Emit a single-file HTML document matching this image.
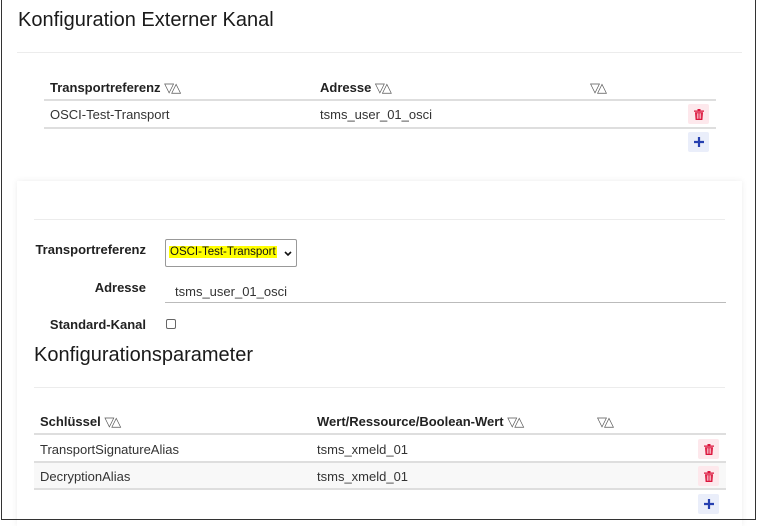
<!DOCTYPE html>
<html><head><meta charset="utf-8"><style>
*{margin:0;padding:0;box-sizing:border-box}
body{width:759px;height:522px;background:#fff;font-family:"Liberation Sans",sans-serif;color:#212529;position:relative;overflow:hidden;font-size:13px}
.a{position:absolute;white-space:nowrap}
.frame{position:absolute;left:1px;top:0;width:755px;height:520px;border:1px solid #333;border-top:none}
.h{font-size:20px;color:#1a1a1a}
.b{font-weight:bold;color:#222}
.hr{position:absolute;height:1px;background:#ececec}
.ln{position:absolute;height:2px;background:#dedede}
.btn{position:absolute;width:21px;height:20px;border-radius:2px;display:flex;align-items:center;justify-content:center}
.del{background:#fde8ec}
.add{background:#eaeefa}
.s{font-size:13px;color:#555;letter-spacing:-3px;font-weight:normal}
</style></head><body>
<div class="a h" style="left:18px;top:9px">Konfiguration Externer Kanal</div>
<div class="hr" style="left:17px;top:52px;width:725px"></div>
<div class="a b" style="left:50px;top:80px">Transportreferenz <span class="s">▽△</span></div>
<div class="a b" style="left:320px;top:80px">Adresse <span class="s">▽△</span></div>
<div class="a s" style="left:590px;top:80px">▽△</div>
<div class="ln" style="left:44px;top:99px;width:672px"></div>
<div class="a" style="left:50px;top:107px;color:#333">OSCI-Test-Transport</div>
<div class="a" style="left:320px;top:107px;color:#333">tsms_user_01_osci</div>
<div class="ln" style="left:44px;top:127px;width:672px"></div>
<div class="btn del" style="left:688px;top:104px"><svg width="10" height="11" viewBox="0 0 10 11"><path d="M0 1.5h10v1.3H0zM3.5 0h3v1.5h-3zM1 3.3h8l-.6 7.7H1.6z" fill="#dc143c"/><path d="M3.3 4.3v5.5M5 4.3v5.5M6.7 4.3v5.5" stroke="#fde8ec" stroke-width=".8"/></svg></div>
<div class="btn add" style="left:688px;top:132px"><svg width="10" height="10"><path d="M5 0v10M0 5h10" stroke="#2640b0" stroke-width="2.2"/></svg></div>

<div style="position:absolute;left:17px;top:181px;width:725px;height:345px;background:#fff;box-shadow:0 0 6px rgba(0,0,0,.08)"></div>
<div class="hr" style="left:34px;top:219px;width:691px"></div>
<div class="a b" style="left:34px;top:242px;width:112px;text-align:right">Transportreferenz</div>
<div style="position:absolute;left:165px;top:239px;width:132px;height:28px;border:1px solid #999;border-radius:2px;background:#fff"></div>
<div class="a" style="left:169px;top:246px;font-size:11.5px;background:#ffff00;color:#111;padding:0 1px">OSCI-Test-Transport</div>
<svg class="a" style="left:284px;top:251px" width="8" height="6" viewBox="0 0 8 6"><path d="M1 1l3 3 3-3" fill="none" stroke="#111" stroke-width="1.6"/></svg>
<div class="a b" style="left:34px;top:280px;width:112px;text-align:right">Adresse</div>
<div class="a" style="left:175px;top:284px;color:#333">tsms_user_01_osci</div>
<div style="position:absolute;left:165px;top:302px;width:561px;height:1px;background:#bbb"></div>
<div class="a b" style="left:34px;top:317px;width:112px;text-align:right">Standard-Kanal</div>
<div style="position:absolute;left:166px;top:319px;width:10px;height:10px;border:1px solid #666;border-radius:2px"></div>
<div class="a h" style="left:34px;top:344px">Konfigurationsparameter</div>
<div class="hr" style="left:34px;top:387px;width:691px"></div>
<div class="a b" style="left:40px;top:414px">Schlüssel <span class="s">▽△</span></div>
<div class="a b" style="left:317px;top:414px">Wert/Ressource/Boolean-Wert <span class="s">▽△</span></div>
<div class="a s" style="left:597px;top:414px">▽△</div>
<div class="ln" style="left:34px;top:433px;width:692px"></div>
<div class="a" style="left:40px;top:442px;color:#333">TransportSignatureAlias</div>
<div class="a" style="left:317px;top:442px;color:#333">tsms_xmeld_01</div>
<div style="position:absolute;left:34px;top:462px;width:692px;height:27px;background:#f8f8f8"></div>
<div class="ln" style="left:34px;top:461px;width:692px"></div>
<div class="a" style="left:40px;top:469px;color:#333">DecryptionAlias</div>
<div class="a" style="left:317px;top:469px;color:#333">tsms_xmeld_01</div>
<div class="ln" style="left:34px;top:488px;width:692px"></div>
<div class="btn del" style="left:698px;top:439px"><svg width="10" height="11" viewBox="0 0 10 11"><path d="M0 1.5h10v1.3H0zM3.5 0h3v1.5h-3zM1 3.3h8l-.6 7.7H1.6z" fill="#dc143c"/><path d="M3.3 4.3v5.5M5 4.3v5.5M6.7 4.3v5.5" stroke="#fde8ec" stroke-width=".8"/></svg></div>
<div class="btn del" style="left:698px;top:466px"><svg width="10" height="11" viewBox="0 0 10 11"><path d="M0 1.5h10v1.3H0zM3.5 0h3v1.5h-3zM1 3.3h8l-.6 7.7H1.6z" fill="#dc143c"/><path d="M3.3 4.3v5.5M5 4.3v5.5M6.7 4.3v5.5" stroke="#fde8ec" stroke-width=".8"/></svg></div>
<div class="btn add" style="left:698px;top:494px"><svg width="10" height="10"><path d="M5 0v10M0 5h10" stroke="#2640b0" stroke-width="2.2"/></svg></div>
<div class="frame"></div>
</body></html>
